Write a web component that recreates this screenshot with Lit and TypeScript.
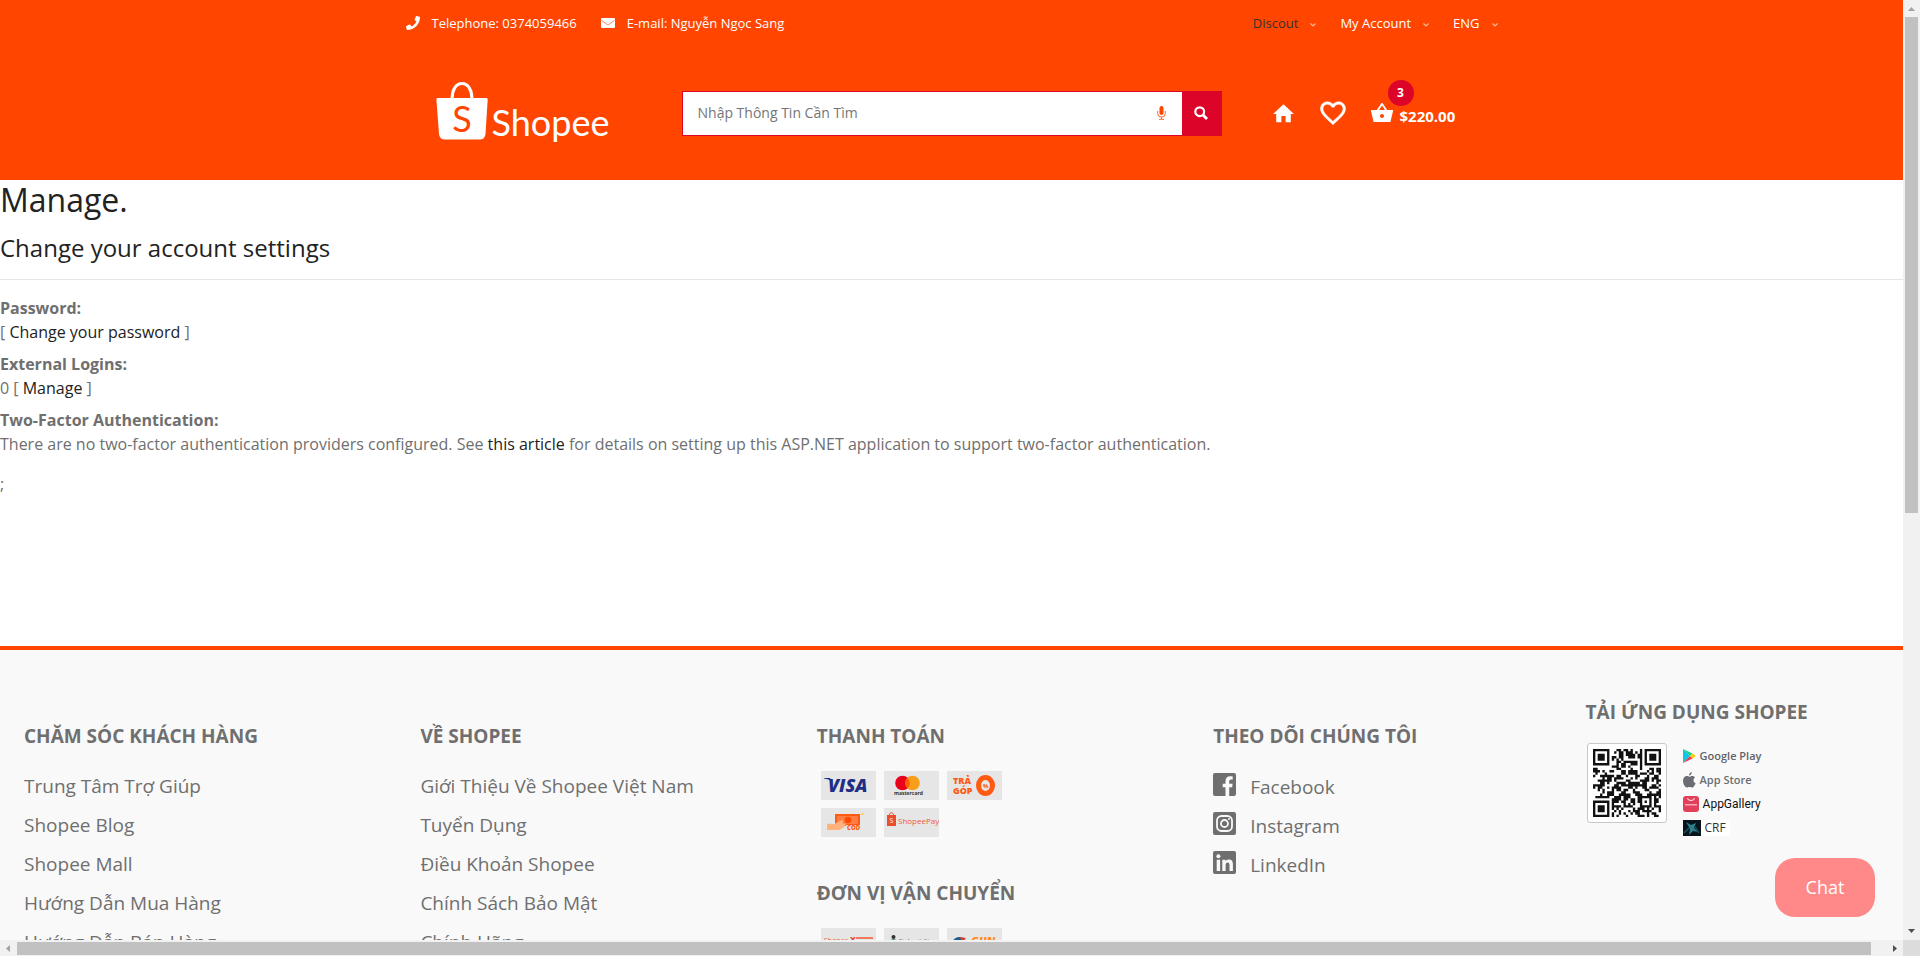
import { LitElement, html, css, svg } from "lit";
import { customElement } from "lit/decorators.js";

const CARE = ["Trung Tâm Trợ Giúp", "Shopee Blog", "Shopee Mall", "Hướng Dẫn Mua Hàng", "Hướng Dẫn Bán Hàng"];
const ABOUT = ["Giới Thiệu Về Shopee Việt Nam", "Tuyển Dụng", "Điều Khoản Shopee", "Chính Sách Bảo Mật", "Chính Hãng"];

const chevron = html`<svg class="chevron" viewBox="0 0 6 4" aria-hidden="true">
  <path d="M.5.5 3 3 5.5.5" fill="none" stroke="currentColor" stroke-width="1.2" /></svg>`;

/** Draws the modules of a 29 x 29 code: three finders, one alignment mark, data between. */
function qrPath(): string {
  const n = 29;
  let seed = 7331;
  const ring = (x: number, y: number, cx: number, cy: number) => Math.max(Math.abs(x - cx), Math.abs(y - cy));
  let d = "";
  for (let y = 0; y < n; y++) {
    for (let x = 0; x < n; x++) {
      seed = (seed * 1103515245 + 12345) % 2147483648;
      let on = seed / 2147483648 < 0.52;
      for (const [cx, cy] of [[3, 3], [25, 3], [3, 25]]) {
        const r = ring(x, y, cx, cy);
        if (r <= 4) on = r === 3 || r <= 1;
      }
      const a = ring(x, y, 22, 22);
      if (a <= 2) on = a !== 1;
      if (on) d += `M${x} ${y}h1v1h-1z`;
    }
  }
  return d;
}
const QR = qrPath();

const tile = (label: string, art: unknown) =>
  html`<li><svg class="tile" viewBox="0 0 55 29" role="img" aria-label=${label}>${art}</svg></li>`;

const visa = svg`<text x="7" y="21" font-family="Open Sans" font-weight="800" font-style="italic" font-size="18" fill="#1f2f86">VISA</text>
  <path d="M3 7h6l2 4C9 9 6 8 3 7.600z" fill="#1f2f86" />`;
const master = svg`<circle cx="18.500" cy="12" r="7.300" fill="#eb001b" /><circle cx="28.500" cy="12" r="7.300" fill="#f79e1b" />
  <path d="M23.500 6.700a7.300 7.300 0 0 1 0 10.600a7.300 7.300 0 0 1 0-10.600z" fill="#ff5f00" />
  <text x="10" y="24" font-family="Open Sans" font-weight="700" font-size="5" fill="#333">mastercard</text>`;
const instal = svg`<text x="6" y="13" font-family="Open Sans" font-weight="800" font-size="9" fill="#ff5a12">TRẢ</text>
  <text x="6" y="23" font-family="Open Sans" font-weight="800" font-size="9" fill="#ff5a12">GÓP</text>
  <ellipse cx="38.500" cy="14.500" rx="7" ry="8" fill="none" stroke="#ff5a12" stroke-width="5" />
  <text x="36" y="17" font-family="Open Sans" font-weight="700" font-size="6" fill="#ff5a12">%</text>`;
const cod = svg`<path d="M14 6h25v12H14z" fill="#ff5a12" /><path d="M16 8h21v8H16z" fill="#ff7d45" /><circle cx="27" cy="12" r="3.300" fill="#ff4a00" />
  <path d="M6 16c3-1 7 1 9-1l6-3c2 0 1 2 0 3l4 1c-2 4-5 6-9 6H6z" fill="#ffb27c" />
  <path d="M25 17h15v6H25z" fill="#e6e6e6" /><text x="26" y="22" font-family="Open Sans" font-weight="800" font-size="6" fill="#ff5a12">COD</text><circle cx="41.500" cy="6" r="1" fill="#ffc02e" />`;
const pay = svg`<path d="M3 7h9v11H3z" fill="#ee4d2d" /><path d="M5.500 7c0-3 4-3 4 0" fill="none" stroke="#ee4d2d" />
  <text x="5.500" y="15" font-family="Open Sans" font-size="7" fill="#fff">S</text>
  <text x="14" y="16" font-family="Open Sans" font-size="8" fill="#ee5a3c">ShopeePay</text>`;
const spx = svg`<text x="3" y="15" font-family="Open Sans" font-size="7" fill="#ee5a3c">Shopee</text>
  <text x="29" y="15" font-family="Open Sans" font-weight="800" font-size="8" fill="#ee4d2d">X</text><path d="M35 9h17v2H35z" fill="#f0795e" />`;
const ghtk = svg`<path d="M5 14a5 5 0 0 1 9 0z" fill="#1d7a45" /><circle cx="9.500" cy="9" r="2" fill="#333" />
  <text x="15" y="14" font-family="Open Sans" font-weight="700" font-size="4" fill="#444">Giaohangtietkiem</text>`;
const ghn = svg`<path d="M5 14c3-6 9-6 13-3l-3 4z" fill="#1b5c92" /><path d="M13 9l6 1-4 5z" fill="#d9432c" />
  <text x="24" y="17" font-family="Open Sans" font-weight="800" font-style="italic" font-size="11" fill="#ff8a1c">GHN</text>`;

@customElement("app-root")
export class AppRoot extends LitElement {
  static styles = css`
    :host { display: block; font: 16px/24px "Open Sans", "Noto Sans", sans-serif; color: #6f6f6f; background: #fff; }
    * { box-sizing: border-box; }
    a { color: inherit; text-decoration: none; }
    ul, dl, dd, h2, h3, h4 { margin: 0; padding: 0; }
    ul { list-style: none; }
    svg { display: block; flex: none; }
    .frame { display: grid; grid-template: minmax(0, 1fr) 16px / minmax(0, 1fr) 17px; height: 100vh; position: relative; }
    .page { overflow: hidden; display: flex; flex-direction: column; }
    .head { background: #ff4500; color: #fff; flex: none; }
    .wrap { width: 100%; max-width: 1140px; margin: 0 auto; padding: 0 15px; }
    .top { display: flex; justify-content: space-between; align-items: center; height: 46px; padding: 0 24px; font-size: 13px; }
    .top ul { display: flex; gap: 24px; }
    .top li { display: flex; align-items: center; gap: 12px; }
    .top svg { width: 14px; }
    .top .chevron { width: 6px; height: 4px; margin-top: 4px; color: #ffb598; }
    .dark { color: #333; }
    .main { display: grid; grid-template-columns: 3fr 6fr 3fr; align-items: center; height: 134px; padding: 0; }
    .logo { display: flex; padding-left: 54px; gap: 4px; }
    .bag { width: 52px; height: 58px; }
    .brand { font: 36px/44px Lato, sans-serif; padding-top: 18px; }
    .search { display: flex; margin: 0 15px; height: 45px; border: 1px solid #dc0529; background: #fff; align-items: center; }
    .search input { flex: 1; min-width: 0; border: 0; outline: 0; padding: 0 15px; font: inherit; font-size: 14px; background: none; color: #333; }
    .search input::placeholder { color: #757575; opacity: 1; }
    .search button { border: 0; padding: 0; display: grid; place-items: center; cursor: pointer; }
    .search .mic { width: 40px; background: none; }
    .search .go { width: 39px; align-self: stretch; background: #dc0529; }
    .tools { display: flex; align-items: center; padding-left: 34px; }
    .tools a { display: flex; align-items: center; position: relative; }
    .home { margin-right: 22px; }
    .heart { margin-right: 22px; }
    .price { font-size: 15px; font-weight: 700; padding: 6px 0 0 6px; }
    .badge { position: absolute; left: 18px; top: -18px; width: 26px; height: 26px; border-radius: 50%; background: #dc0529; font: 700 12px/26px "Open Sans", sans-serif; text-align: center; }
    .body { min-height: 466px; flex: none; }
    h2 { font-weight: 400; font-size: 32px; line-height: 40px; margin-bottom: 13px; color: #222; }
    h4 { font-weight: 400; font-size: 24px; line-height: 29px; margin-bottom: 17px; color: #222; }
    dl { border-top: 1px solid #e5e5e5; padding-top: 16px; margin-bottom: 16px; }
    dt { font-weight: 700; }
    dd { margin-bottom: 8px; }
    dd a { color: #222; }
    .foot { border-top: 4px solid #ff4500; background: #f9f9f9; padding-top: 51px; flex: 1 0 auto; display: grid; grid-template-columns: repeat(5, 20.83%); font-size: 19px; line-height: 29px; }
    .col { padding: 24px; }
    h3 { font-size: 19px; line-height: 23px; font-weight: 700; margin-bottom: 24px; white-space: nowrap; }
    .links { display: grid; gap: 10px; }
    .tiles { display: flex; flex-wrap: wrap; gap: 8px; width: 190px; margin: -1px 4px 45px; }
    .tile { width: 55px; height: 29px; background: #e6e6e6; overflow: hidden; }
    .links .social { display: flex; gap: 14px; padding-top: 1px; line-height: 28px; }
    .social svg { width: 23px; height: 23px; }
    .apps { padding: 0; }
    .apps h3 { margin-bottom: 19px; }
    .get { display: flex; gap: 16px; }
    .qr { width: 80px; height: 80px; border: 1px solid #c8c8c8; border-radius: 3px; background: #fff; padding: 5px; margin-left: 1px; }
    .stores { display: grid; grid-auto-rows: 16px; justify-items: start; gap: 8px; padding-top: 5px; font-size: 12px; line-height: 16px; }
    .stores a { display: flex; align-items: center; gap: 4px; height: 16px; }
    .stores .google { color: #5f6368; font-weight: 600; font-size: 11px; letter-spacing: normal; }
    .stores .apple { color: #6a6e72; font-weight: 600; font-size: 11px; }
    .stores .gallery { color: #111; font-family: Roboto, sans-serif; }
    .stores .crf { color: #333; background: #fff; padding-right: 4px; }
    .chat { position: absolute; right: 45px; bottom: 39px; width: 100px; height: 59px; border: 0; border-radius: 20px; background: #ff8888; color: #fff; font: 18px/24px "Open Sans", sans-serif; padding: 0 0 2px; cursor: pointer; }
    .bar { background: #f1f1f1; display: flex; align-items: center; }
    .bar.v { flex-direction: column; }
    .track { flex: 1; display: flex; }
    .v .track { flex-direction: column; width: 13px; }
    .h .track { height: 13px; }
    .thumb { background: #c1c1c1; }
    .v .thumb { height: 54.700%; }
    .h .thumb { width: 99.200%; }
    .arrow { width: 17px; height: 17px; fill: #505050; }
    .arrow.off { fill: #a3a3a3; }
    .corner { background: #dcdcdc; }
  `;

  render() {
    return html`
      <div class="frame">
        <div class="page">
          <header class="head">
            <div class="wrap top">
              <ul>
                <li>
                  <svg viewBox="0 0 512 512" fill="#fff" aria-hidden="true"><path d="M493.4 24.6l-104-24c-11.3-2.6-22.9 3.3-27.5 13.9l-48 112c-4.2 9.8-1.4 21.3 6.9 28l60.6 49.6c-36 76.7-98.9 140.500-177.2 177.2l-49.6-60.6c-6.800-8.300-18.200-11.100-28-6.900l-112 48C3.900 366.500-2 378.100.6 389.400l24 104C27.100 504.200 36.700 512 48 512c256.100 0 464-207.500 464-464 0-11.200-7.700-20.900-18.600-23.400z" /></svg>
                  <span>Telephone: 0374059466</span>
                </li>
                <li>
                  <svg viewBox="0 0 14 10" aria-hidden="true"><rect width="14" height="10" rx="1" fill="#fff" /><path d="M.5 2.500 7 7l6.500-4.500" fill="none" stroke="#ff7d4d" stroke-width=".9" /></svg>
                  <span>E-mail: Nguyễn Ngọc Sang</span>
                </li>
              </ul>
              <ul>
                <li><a class="dark" href="#">Discout</a>${chevron}</li>
                <li><a href="#">My Account</a>${chevron}</li>
                <li><a href="#">ENG</a>${chevron}</li>
              </ul>
            </div>
            <div class="wrap main">
              <a class="logo" href="#" aria-label="Shopee">
                <svg class="bag" viewBox="0 0 52 58">
                  <path d="M16 17C16 8 20 1.500 26 1.500S36 8 36 17" fill="none" stroke="#fff" stroke-width="3" />
                  <path d="M1.500 16h49q1.300 0 1.200 1.500L49.500 52q-.4 5.500-6 5.500H9q-5.500 0-6-5.500L.4 17.500Q.3 16 1.500 16z" fill="#fff" />
                  <text x="26" y="50" text-anchor="middle" font-family="Lato" font-size="36" fill="#ff4500">S</text>
                </svg>
                <span class="brand">Shopee</span>
              </a>
              <form class="search" role="search" @submit=${(e: Event) => e.preventDefault()}>
                <input type="text" aria-label="Tìm kiếm" placeholder="Nhập Thông Tin Cần Tìm" />
                <button class="mic" type="button" aria-label="Micro">
                  <svg width="9" height="14" viewBox="0 0 9 14"><rect x="2.500" width="4" height="9" rx="2" fill="#ff4500" /><path d="M.7 5v2.500a3.800 3.500 0 0 0 7.600 0V5M4.500 11v2M2 13.300h5" fill="none" stroke="#ff6a33" stroke-width="1" /></svg>
                </button>
                <button class="go" type="submit" aria-label="Tìm">
                  <svg width="14" height="14" viewBox="0 0 14 14" fill="none" stroke="#fff"><circle cx="5.700" cy="5.700" r="4.400" stroke-width="2.200" /><path d="m9 9 4 4" stroke-width="2.800" /></svg>
                </button>
              </form>
              <div class="tools">
                <a class="home" href="#" aria-label="Home"><svg width="25" height="25" viewBox="0 0 24 24" fill="#fff"><path d="M10 20.500v-6h4v6h5v-8h3L12 3 2 12.500h3v8z" /></svg></a>
                <a class="heart" href="#" aria-label="Wishlist"><svg width="30" height="30" viewBox="0 0 24 24" fill="#fff" stroke="#fff" stroke-width=".4"><path d="M16.500 3c-1.740 0-3.410.81-4.500 2.090C10.910 3.810 9.240 3 7.500 3 4.420 3 2 5.420 2 8.500c0 3.780 3.400 6.860 8.550 11.540L12 21.350l1.450-1.320C18.600 15.360 22 12.280 22 8.500 22 5.420 19.580 3 16.500 3zm-4.400 15.550l-.1.1-.1-.1C7.140 14.240 4 11.390 4 8.500 4 6.500 5.500 5 7.500 5c1.540 0 3.040.99 3.570 2.360h1.870C13.460 5.990 14.960 5 16.500 5c2 0 3.500 1.500 3.500 3.500 0 2.890-3.140 5.740-7.900 10.050z" /></svg></a>
                <a href="#" aria-label="Cart">
                  <svg width="24" height="24" viewBox="0 0 24 24" fill="#fff"><path fill-rule="evenodd" d="M17.210 9l-4.380-6.560c-.19-.28-.51-.42-.83-.42-.32 0-.64.14-.83.43L6.790 9H1l.04 1.270 2.540 10.730h16.850l2.540-10.730L23 9h-5.790zM9 9l3-4.400L15 9H9zm3 8c-1.100 0-2-.9-2-2s.9-2 2-2 2 .9 2 2-.9 2-2 2z" /></svg>
                  <span class="badge">3</span><span class="price">$220.00</span>
                </a>
              </div>
            </div>
          </header>
          <main class="body">
            <h2>Manage.</h2>
            <h4>Change your account settings</h4>
            <dl>
              <dt>Password:</dt>
              <dd>[ <a href="#">Change your password</a> ]</dd>
              <dt>External Logins:</dt>
              <dd>0 [ <a href="#">Manage</a> ]</dd>
              <dt>Two-Factor Authentication:</dt>
              <dd>There are no two-factor authentication providers configured. See <a href="#">this article</a> for details on setting up this ASP.NET application to support two-factor authentication.</dd>
            </dl>
            ;
          </main>
          <footer class="foot">
            <section class="col"><h3>CHĂM SÓC KHÁCH HÀNG</h3><ul class="links">${CARE.map((t) => html`<li><a href="#">${t}</a></li>`)}</ul></section>
            <section class="col"><h3>VỀ SHOPEE</h3><ul class="links">${ABOUT.map((t) => html`<li><a href="#">${t}</a></li>`)}</ul></section>
            <section class="col">
              <h3>THANH TOÁN</h3>
              <ul class="tiles">${tile("Visa", visa)}${tile("Mastercard", master)}${tile("Trả góp", instal)}${tile("COD", cod)}${tile("ShopeePay", pay)}</ul>
              <h3>ĐƠN VỊ VẬN CHUYỂN</h3>
              <ul class="tiles">${tile("Shopee Xpress", spx)}${tile("Giao hàng tiết kiệm", ghtk)}${tile("GHN", ghn)}</ul>
            </section>
            <section class="col">
              <h3>THEO DÕI CHÚNG TÔI</h3>
              <ul class="links">
                <li><a class="social" href="#"><svg viewBox="0 0 23 23"><rect width="23" height="23" rx="2" fill="#6f6f6f" /><path d="M12.500 23v-8.800H9.700v-3.500h2.800V8.200c0-3.200 1.800-4.900 4.700-4.900 1.300 0 2.500.2 2.500.2v3h-1.600c-1.500 0-1.900.9-1.900 1.900v2.300h3.400l-.5 3.500h-2.900V23z" fill="#f9f9f9" /></svg>Facebook</a></li>
                <li><a class="social" href="#"><svg viewBox="0 0 23 23" fill="none" stroke="#f9f9f9" stroke-width="1.800"><rect width="23" height="23" rx="2" fill="#6f6f6f" stroke="none" /><rect x="4" y="4" width="15" height="15" rx="4.500" /><circle cx="11.500" cy="11.500" r="3.500" /><circle cx="16" cy="7" r="1" fill="#f9f9f9" stroke="none" /></svg>Instagram</a></li>
                <li><a class="social" href="#"><svg viewBox="0 0 23 23"><rect width="23" height="23" rx="2" fill="#6f6f6f" /><path d="M3.700 8.800h3.400V20H3.700zM9.300 8.800h3.200v1.500c.6-1 1.700-1.800 3.400-1.800 3.300 0 4 2.200 4 5.200V20h-3.400v-5.600c0-1.400-.1-3-1.800-3s-2.100 1.400-2.100 2.900V20H9.300z" fill="#f9f9f9" /><circle cx="5.400" cy="5.200" r="2" fill="#f9f9f9" /></svg>LinkedIn</a></li>
              </ul>
            </section>
            <section class="col apps">
              <h3>TẢI ỨNG DỤNG SHOPEE</h3>
              <div class="get">
                <svg class="qr" viewBox="0 0 29 29" role="img" aria-label="QR"><path d=${QR} fill="#111" /></svg>
                <div class="stores">
                  <a class="google" href="#"><svg width="13" height="14" viewBox="0 0 13 14"><path d="M0 0v14l7-7z" fill="#10c4e8" /><path d="M0 0l9.500 4.600L7 7z" fill="#0fd68a" /><path d="M0 14l9.500-4.600L7 7z" fill="#f2384d" /><path d="M9.500 4.600 13 7 9.500 9.400 7 7z" fill="#ffce0a" /></svg>Google Play</a>
                  <a class="apple" href="#"><svg width="13" height="16" viewBox="0 0 13 16" fill="#6a6e72"><path d="M8.800 0c.1 1.800-1.200 3.400-2.700 3.500C5.900 1.900 7.300.3 8.800 0zM6.400 4.800c.6 0 1.500-.8 2.900-.8 1.200 0 2.200.6 2.800 1.500-2.300 1.400-2 4.700.5 5.700-.7 1.900-2 4.300-3.400 4.300-1 0-1.400-.6-2.700-.6s-1.700.6-2.600.6C2.300 15.500 0 12 0 9 0 5.900 1.900 4.100 3.800 4.100c1.200 0 2 .7 2.600.7z" /></svg>App Store</a>
                  <a class="gallery" href="#"><svg width="16" height="16" viewBox="0 0 16 16"><rect width="16" height="16" rx="3" fill="#e2405a" /><path d="M4.500 2a3.500 2.500 0 0 0 7 0" fill="none" stroke="#fff" stroke-width=".9" /><path d="M2 8h12v1.500H2z" fill="#f4a9b4" /></svg>AppGallery</a>
                  <a class="crf" href="#"><svg width="18" height="16" viewBox="0 0 18 16"><path d="M0 0h18v16H0z" fill="#07141c" /><path d="m3 2 5 3 5-2-2 5 4 4-5-1-4 4 1-6z" fill="#2e7f8c" /><path d="m1 13 5-5M12 7l4 6" stroke="#1d4f5c" stroke-width="1.500" /></svg>CRF</a>
                </div>
              </div>
            </section>
          </footer>
        </div>
        <div class="bar v" aria-hidden="true">
          <svg class="arrow off" viewBox="0 0 17 17"><path d="M5 11h7L8.500 7z" /></svg>
          <div class="track"><div class="thumb"></div></div>
          <svg class="arrow" viewBox="0 0 17 17"><path d="M5 6h7l-3.500 4z" /></svg>
        </div>
        <div class="bar h" aria-hidden="true">
          <svg class="arrow off" viewBox="0 0 17 17"><path d="M10 5v7L6 8.500z" /></svg>
          <div class="track"><div class="thumb"></div></div>
          <svg class="arrow" viewBox="0 0 17 17"><path d="M7 5v7l4-3.500z" /></svg>
        </div>
        <div class="corner"></div>
        <button class="chat" type="button">Chat</button>
      </div>
    `;
  }
}
